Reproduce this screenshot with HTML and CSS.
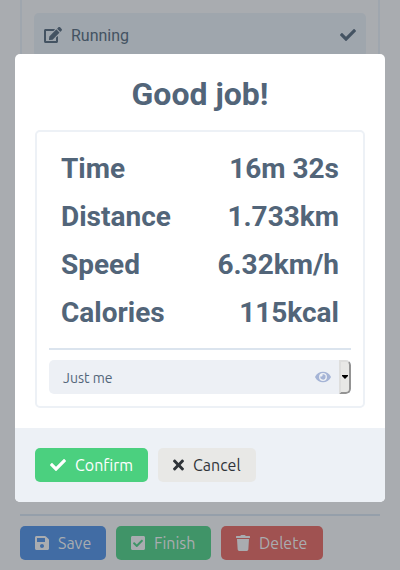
FILE: index.html
```html
<!DOCTYPE html>
<html lang="en">
<head>
<meta charset="utf-8">
<title>Good job!</title>
<link rel="stylesheet" href="styles.css">
</head>
<body>
<main class="page">
  <section class="panel">
    <div class="activity">
      <svg class="icon edit" viewBox="0 0 576 512"><path d="M402.6 83.2l90.2 90.2c3.8 3.8 3.8 10 0 13.8L274.4 405.6l-92.8 10.3c-12.4 1.4-22.9-9.1-21.5-21.5l10.3-92.8L388.8 83.2c3.8-3.8 10-3.8 13.8 0zm162-22.9l-48.8-48.8c-15.2-15.2-39.9-15.2-55.2 0l-35.4 35.4c-3.8 3.8-3.8 10 0 13.8l90.2 90.2c3.8 3.8 10 3.8 13.8 0l35.4-35.4c15.2-15.3 15.2-40 0-55.2zM384 346.2V448H64V128h229.8c3.2 0 6.2-1.3 8.5-3.5l40-40c7.6-7.6 2.2-20.5-8.5-20.5H48C21.5 64 0 85.5 0 112v352c0 26.5 21.5 48 48 48h352c26.5 0 48-21.5 48-48V306.2c0-10.7-12.9-16-20.5-8.5l-40 40c-2.2 2.3-3.5 5.3-3.5 8.5z"/></svg>
      <span class="activity-name">Running</span>
      <svg class="icon" viewBox="0 0 512 512"><path d="M173.898 439.404l-166.4-166.4c-9.997-9.997-9.997-26.206 0-36.204l36.203-36.204c9.997-9.998 26.207-9.998 36.204 0L192 312.69 432.095 72.596c9.997-9.997 26.207-9.997 36.204 0l36.203 36.204c9.997 9.997 9.997 26.206 0 36.204l-294.4 294.401c-9.998 9.997-26.207 9.997-36.204-.001z"/></svg>
    </div>
  </section>
  <div class="actions">
    <button class="btn save"><svg class="icon narrow" viewBox="0 0 448 512"><path d="M433.941 129.941l-83.882-83.882A48 48 0 0 0 316.118 32H48C21.49 32 0 53.49 0 80v352c0 26.51 21.49 48 48 48h352c26.51 0 48-21.49 48-48V163.882a48 48 0 0 0-14.059-33.941zM224 416c-35.346 0-64-28.654-64-64 0-35.346 28.654-64 64-64s64 28.654 64 64c0 35.346-28.654 64-64 64zm96-304.52V212c0 6.627-5.373 12-12 12H76c-6.627 0-12-5.373-12-12V108c0-6.627 5.373-12 12-12h228.52c3.183 0 6.235 1.264 8.485 3.515l3.48 3.48A11.996 11.996 0 0 1 320 111.48z"/></svg><span>Save</span></button>
    <button class="btn finish"><svg class="icon narrow" viewBox="0 0 448 512"><path d="M400 480H48c-26.51 0-48-21.49-48-48V80c0-26.51 21.49-48 48-48h352c26.51 0 48 21.49 48 48v352c0 26.51-21.49 48-48 48zm-204.686-98.059l184-184c6.248-6.248 6.248-16.379 0-22.627l-22.627-22.627c-6.248-6.248-16.379-6.249-22.628 0L184 302.745l-70.059-70.059c-6.248-6.248-16.379-6.248-22.628 0l-22.627 22.627c-6.248 6.248-6.248 16.379 0 22.627l104 104c6.249 6.25 16.379 6.25 22.628.001z"/></svg><span>Finish</span></button>
    <button class="btn delete"><svg class="icon narrow" viewBox="0 0 448 512"><path d="M432 32H312l-9.4-18.7A24 24 0 0 0 281.1 0H166.8a23.72 23.72 0 0 0-21.4 13.3L136 32H16A16 16 0 0 0 0 48v32a16 16 0 0 0 16 16h416a16 16 0 0 0 16-16V48a16 16 0 0 0-16-16zM53.2 467a48 48 0 0 0 47.9 45h245.8a48 48 0 0 0 47.9-45L416 128H32z"/></svg><span>Delete</span></button>
  </div>
</main>

<div class="overlay">
  <div class="modal" role="dialog">
    <div class="modal-body">
      <h1 class="title">Good job!</h1>
      <div class="summary">
        <dl class="stats">
          <div class="stat"><dt>Time</dt><dd>16m 32s</dd></div>
          <div class="stat"><dt>Distance</dt><dd>1.733km</dd></div>
          <div class="stat"><dt>Speed</dt><dd>6.32km/h</dd></div>
          <div class="stat"><dt>Calories</dt><dd>115kcal</dd></div>
        </dl>
        <div class="select">
          <span class="select-value">Just me</span>
          <svg class="icon eye" viewBox="0 0 576 512"><path d="M572.52 241.4C518.29 135.59 410.93 64 288 64S57.68 135.64 3.48 241.41a32.35 32.35 0 0 0 0 29.19C57.71 376.41 165.07 448 288 448s230.32-71.64 284.52-177.41a32.35 32.35 0 0 0 0-29.19zM288 400a144 144 0 1 1 144-144 143.93 143.93 0 0 1-144 144zm0-240a95.31 95.31 0 0 0-25.31 3.79 47.85 47.85 0 0 1-66.9 66.9A95.78 95.78 0 1 0 288 160z"/></svg>
          <span class="select-arrow"><svg width="6" height="4" viewBox="0 0 6 4"><path d="M0 0h6v1L3 4 0 1z"/></svg></span>
        </div>
      </div>
    </div>
    <div class="modal-footer">
      <button class="btn confirm"><svg class="icon" viewBox="0 0 512 512"><path d="M173.898 439.404l-166.4-166.4c-9.997-9.997-9.997-26.206 0-36.204l36.203-36.204c9.997-9.998 26.207-9.998 36.204 0L192 312.69 432.095 72.596c9.997-9.997 26.207-9.997 36.204 0l36.203 36.204c9.997 9.997 9.997 26.206 0 36.204l-294.4 294.401c-9.998 9.997-26.207 9.997-36.204-.001z"/></svg><span>Confirm</span></button>
      <button class="btn cancel"><svg class="icon cross" viewBox="0 0 352 512"><path d="M242.72 256l100.07-100.07c12.28-12.28 12.28-32.19 0-44.48l-22.24-22.24c-12.28-12.28-32.19-12.28-44.48 0L176 189.28 75.93 89.21c-12.28-12.28-32.19-12.28-44.48 0L9.21 111.45c-12.28 12.28-12.28 32.19 0 44.48L109.28 256 9.21 356.07c-12.28 12.28-12.28 32.19 0 44.48l22.24 22.24c12.28 12.28 32.2 12.28 44.48 0L176 322.72l100.07 100.07c12.28 12.28 32.2 12.28 44.48 0l22.24-22.24c12.28-12.28 12.28-32.19 0-44.48L242.72 256z"/></svg><span>Cancel</span></button>
    </div>
  </div>
</div>
</body>
</html>
```

FILE: styles.css
```css
* { box-sizing: border-box; }
body {
  margin: 0;
  height: 570px;
  overflow: hidden;
  position: relative;
  background: #a9acb0;
  color: #526579;
  font: 16px/24px Roboto, sans-serif;
}
.page {
  display: flex;
  flex-direction: column;
  height: 570px;
  padding: 0 20px 10px;
}
.panel {
  height: 494px;
  padding: 13px 12px 0;
  border: solid #9fa6ae;
  border-width: 0 2px 2px;
  border-radius: 0 0 5px 5px;
}
.activity {
  display: flex;
  align-items: center;
  height: 44px;
  padding: 0 10px;
  border-radius: 5px;
  background: #9fa6ad;
  color: #445362;
}
.activity-name { flex: 1; margin-left: 9px; padding-top: 2px; }
.icon { display: block; flex: none; width: 16px; height: 16px; fill: currentColor; }
.edit { width: 18px; }
.eye { width: 16px; height: 14px; color: #a5b4d6; }
.narrow { width: 14px; }
.cross { width: 11px; }
.actions {
  display: flex;
  gap: 10px;
  margin-top: 20px;
  padding-top: 10px;
  border-top: 2px solid #959faa;
}
.btn {
  display: flex;
  align-items: center;
  gap: 9px;
  height: 34px;
  padding: 0 0 0 15px;
  border: 0;
  border-radius: 5px;
  font: 16px/24px Ubuntu, "Noto Sans", sans-serif;
  white-space: nowrap;
}
.save { width: 86px; background: #416ca4; color: #a9acb0; }
.finish { width: 95px; background: #409468; color: #a9acb0; }
.delete { width: 102px; background: #a05251; color: #a9acb0; }
.confirm { width: 113px; background: #4bd07f; color: #fff; }
.cancel { width: 98px; background: #e8e8e6; color: #2e3338; }
.overlay {
  position: absolute;
  inset: 0;
  padding: 54px 15px 0;
}
.modal {
  display: flex;
  flex-direction: column;
  height: 448px;
  overflow: hidden;
  border-radius: 5px;
  background: #fff;
}
.modal-body { height: 374px; padding: 20px 20px 0; }
.title { margin: 0 0 16px; font-size: 32px; line-height: 40px; text-align: center; }
.summary { height: 278px; padding: 12px; border: 2px solid #edf1f6; border-radius: 5px; }
.stats { margin: 0 0 10px; height: 206px; padding: 1px 12px 0; border-bottom: 2px solid #dbe4ee; }
.stat {
  display: flex;
  justify-content: space-between;
  height: 48px;
  font-size: 28px;
  line-height: 48px;
  font-weight: 700;
}
.stat dd { margin: 0; }
.select {
  display: flex;
  align-items: center;
  height: 34px;
  padding-left: 14px;
  overflow: hidden;
  border-radius: 5px;
  background: #edf0f5;
  font: 14px/20px Ubuntu, "Noto Sans", sans-serif;
}
.select-value { flex: 1; padding-top: 2px; }
.select-arrow {
  display: flex;
  align-items: center;
  justify-content: center;
  width: 12px;
  height: 34px;
  margin-left: 8px;
  border: 2px solid;
  border-color: #dededd #949494 #949494 #dededd;
  border-radius: 0 5px 5px 0;
  background: #e8e8e6;
  color: #000;
}
.modal-footer { display: flex; gap: 10px; height: 74px; padding: 20px; background: #edf1f6; }
```
